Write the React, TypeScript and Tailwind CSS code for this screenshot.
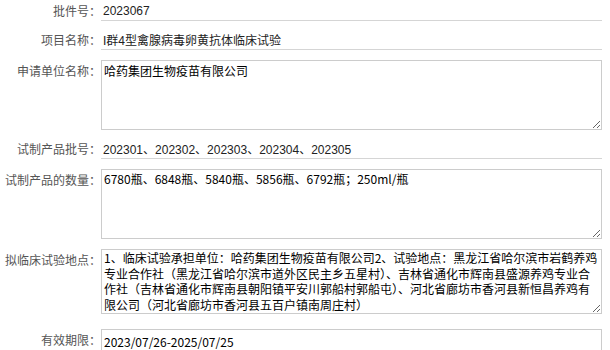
const labelCls =
  "w-[101px] shrink-0 text-right text-[12px] leading-[19px] pt-[1px] text-[#555] font-['Noto_Sans_CJK_SC',sans-serif]";

const lineInputCls =
  "w-[501px] h-[21px] border-0 border-b border-[#d5d5d5] pl-[2px] pt-[1px] text-[12px] leading-[19px] text-[#222] outline-none bg-white font-['Liberation_Sans','Noto_Sans_CJK_SC',sans-serif]";

const areaCls =
  "block w-[501px] border border-[#cccccc] px-[2px] text-black outline-none bg-white overflow-hidden font-['Noto_Sans_CJK_SC',sans-serif]";

const siteText = [
  '1、临床试验承担单位：哈药集团生物疫苗有限公司2、试验地点：黑龙江省哈尔滨市岩鹤养鸡',
  '专业合作社（黑龙江省哈尔滨市道外区民主乡五星村）、吉林省通化市辉南县盛源养鸡专业合',
  '作社（吉林省通化市辉南县朝阳镇平安川郭船村郭船屯）、河北省廊坊市香河县新恒昌养鸡有',
  '限公司（河北省廊坊市香河县五百户镇南周庄村）',
].join('\n');

function LineRow({ label, value, className = '' }: { label: string; value: string; className?: string }) {
  return (
    <div className={`flex items-start ${className}`}>
      <div className={labelCls}>{label}</div>
      <input readOnly value={value} className={lineInputCls} />
    </div>
  );
}

export default function App() {
  return (
    <div className="w-[610px] h-[350px] overflow-hidden bg-white">
      <LineRow label="批件号：" value="2023067" />
      <LineRow label="项目名称：" value="I群4型禽腺病毒卵黄抗体临床试验" className="mt-[8px]" />

      {/* 申请单位 */}
      <div className="flex items-start mt-[10px]">
        <div className={labelCls}>申请单位名称：</div>
        <textarea
          readOnly
          defaultValue="哈药集团生物疫苗有限公司"
          className={`${areaCls} h-[70px] pt-[2px] text-[12px] leading-[16px]`}
        />
      </div>

      <LineRow
        label="试制产品批号："
        value="202301、202302、202303、202304、202305"
        className="mt-[8px]"
      />

      <div className="flex items-start mt-[10px]">
        <div className={labelCls}>试制产品的数量：</div>
        <textarea
          readOnly
          defaultValue="6780瓶、6848瓶、5840瓶、5856瓶、6792瓶；250ml/瓶"
          className={`${areaCls} h-[70px] pt-[1px] text-[12px] leading-[16px]`}
        />
      </div>

      <div className="flex items-start mt-[10px]">
        <div className={labelCls}>拟临床试验地点：</div>
        <textarea
          readOnly
          defaultValue={siteText}
          className={`${areaCls} h-[65px] pt-0 text-[12px] leading-[15.7px] whitespace-pre`}
        />
      </div>

      {/* 有效期限 */}
      <div className="flex items-start mt-[15px]">
        <div className={labelCls}>有效期限：</div>
        <input
          readOnly
          value="2023/07/26-2025/07/25"
          className="w-[501px] h-[24px] border border-[#cccccc] px-[2px] pt-[1px] text-[12px] leading-[18px] text-black outline-none bg-white font-['Noto_Sans_CJK_SC',sans-serif] self-start"
        />
      </div>
    </div>
  );
}
